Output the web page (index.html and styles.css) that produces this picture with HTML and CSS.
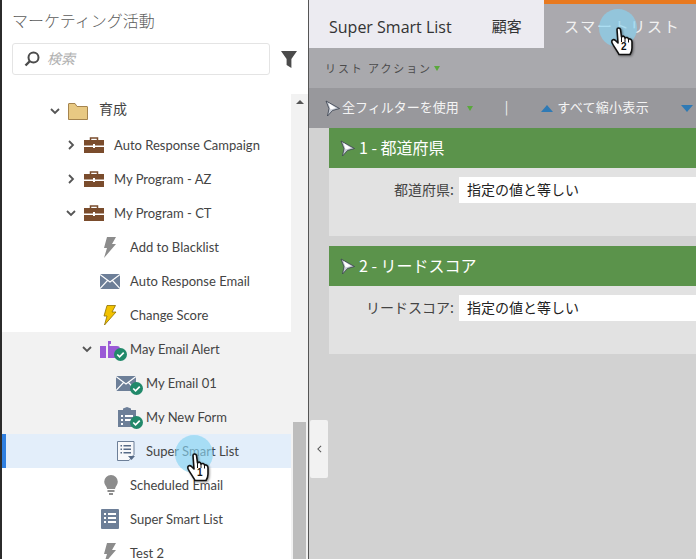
FILE: index.html
```html
<!DOCTYPE html>
<html lang="ja">
<head>
    <meta charset="UTF-8">
    <title>Super Smart List</title>
    <link rel="stylesheet" href="styles.css">
</head>
<body>
<div class="page">
    <aside class="sidebar">
        <h2 class="side-title">マーケティング活動</h2>
        <div class="search-row">
            <div class="search">
                <svg class="search-icon" viewBox="0 0 16 16"><circle cx="9.500" cy="6.500" r="5" fill="none" stroke="#4b4b4b" stroke-width="2"/><path d="M6 10l-4.500 4.500" stroke="#4b4b4b" stroke-width="2.400"/></svg>
                <span class="search-text">検索</span>
            </div>
            <svg class="filter-icon" viewBox="0 0 16 17"><path d="M0 0h16l-5.600 8v9l-4.800-3V8z" fill="#4b4b4b"/></svg>
        </div>
        <div class="tree-wrap">
            <div class="tree">
                <div class="row ind-1">
                    <svg class="chev" viewBox="0 0 10 10"><path d="M1 3l4 4 4-4" fill="none" stroke="#555" stroke-width="1.800"/></svg>
                    <svg class="icon folder" viewBox="0 0 20 17"><path d="M.5 16.500V1q0-.5.5-.5h6l2 3h10q.5 0 .5.5v12.500z" fill="#e8c983" stroke="#a5844e"/></svg>
                    <span class="cjk-label">育成</span>
                </div>
                <div class="row ind-2">
                    <svg class="chev" viewBox="0 0 10 10"><path d="M3 1l4 4-4 4" fill="none" stroke="#555" stroke-width="1.800"/></svg>
                    <svg class="icon case" viewBox="0 0 20 16"><path d="M6.500 3V1h7v2" fill="none" stroke="#7a4c2c" stroke-width="1.500"/><path d="M0 3h20v5.500H11V7H9v1.500H0zM0 10h9v1h2v-1h9v6H0z" fill="#7a4c2c"/></svg>
                    <span>Auto Response Campaign</span>
                </div>
                <div class="row ind-2">
                    <svg class="chev" viewBox="0 0 10 10"><path d="M3 1l4 4-4 4" fill="none" stroke="#555" stroke-width="1.800"/></svg>
                    <svg class="icon case" viewBox="0 0 20 16"><path d="M6.500 3V1h7v2" fill="none" stroke="#7a4c2c" stroke-width="1.500"/><path d="M0 3h20v5.500H11V7H9v1.500H0zM0 10h9v1h2v-1h9v6H0z" fill="#7a4c2c"/></svg>
                    <span>My Program - AZ</span>
                </div>
                <div class="row ind-2">
                    <svg class="chev" viewBox="0 0 10 10"><path d="M1 3l4 4 4-4" fill="none" stroke="#555" stroke-width="1.800"/></svg>
                    <svg class="icon case" viewBox="0 0 20 16"><path d="M6.500 3V1h7v2" fill="none" stroke="#7a4c2c" stroke-width="1.500"/><path d="M0 3h20v5.500H11V7H9v1.500H0zM0 10h9v1h2v-1h9v6H0z" fill="#7a4c2c"/></svg>
                    <span>My Program - CT</span>
                </div>
                <div class="row ind-3">
                    <svg class="icon bolt" viewBox="0 0 14 21"><path d="M4 0h9L9 7h4L1 21l3-10H1z" fill="#8c8c8c"/></svg>
                    <span>Add to Blacklist</span>
                </div>
                <div class="row ind-3">
                    <svg class="icon mail" viewBox="0 0 20 15"><rect width="20" height="15" fill="#6d7f98"/><path d="M0 .5l10 7.500 10-7.500M0 14.500l7.500-8M20 14.500l-7.500-8" fill="none" stroke="#fff" stroke-width="1.100"/></svg>
                    <span>Auto Response Email</span>
                </div>
                <div class="row ind-3">
                    <svg class="icon bolt" viewBox="0 0 14 21"><path d="M4 .5h8.500L9 7h4L1.500 20l2.500-9H1z" fill="#f2c200" stroke="#8d7000" stroke-width=".8"/></svg>
                    <span>Change Score</span>
                </div>
                <div class="row ind-4 shaded">
                    <svg class="chev" viewBox="0 0 10 10"><path d="M1 3l4 4 4-4" fill="none" stroke="#555" stroke-width="1.800"/></svg>
                    <span class="icon-wrap">
                        <svg class="icon prog" viewBox="0 0 20 17"><path d="M0 5h6v12H0zM8 0h3v3H9.500v2H17q3 0 3 3v9H8z" fill="#9a59d6"/></svg>
                        <svg class="check check-prog" viewBox="0 0 14 14"><circle cx="7" cy="7" r="7" fill="#21896a"/><path d="M3.500 7l2.500 2.500 4.500-4.500" fill="none" stroke="#fff" stroke-width="1.800"/></svg>
                    </span>
                    <span>May Email Alert</span>
                </div>
                <div class="row ind-5 shaded">
                    <span class="icon-wrap">
                        <svg class="icon mail" viewBox="0 0 20 15"><rect width="20" height="15" fill="#6d7f98"/><path d="M0 .5l10 7.500 10-7.500M0 14.500l7.500-8M20 14.500l-7.500-8" fill="none" stroke="#fff" stroke-width="1.100"/></svg>
                        <svg class="check check-mail" viewBox="0 0 14 14"><circle cx="7" cy="7" r="7" fill="#21896a"/><path d="M3.500 7l2.500 2.500 4.500-4.500" fill="none" stroke="#fff" stroke-width="1.800"/></svg>
                    </span>
                    <span>My Email 01</span>
                </div>
                <div class="row ind-5 shaded">
                    <span class="icon-wrap">
                        <svg class="icon form" viewBox="0 0 18 20"><path d="M0 3h5V1.500L9 0l4 1.500V3h5v17H0z" fill="#6d7f98"/><path d="M3 8h2v2H3zM7 8h8v2H7zM3 12h2v2H3zM7 12h8v2H7zM3 16h2v2H3z" fill="#fff"/></svg>
                        <svg class="check check-form" viewBox="0 0 14 14"><circle cx="7" cy="7" r="7" fill="#21896a"/><path d="M3.500 7l2.500 2.500 4.500-4.500" fill="none" stroke="#fff" stroke-width="1.800"/></svg>
                    </span>
                    <span>My New Form</span>
                </div>
                <div class="row ind-5 selected">
                    <svg class="icon smart" viewBox="0 0 18 20"><path d="M.5.500h16.500v13l-5 6H.5z" fill="#f7f8fa" stroke="#6d7f98"/><path d="M3.500 4h1.500v1.500H3.500zM6.500 4h7.500v1.500H6.500zM3.500 7.500h1.500V9H3.500zM6.500 7.500h7.500V9H6.500zM3.500 11h1.500v1.500H3.500zM6.500 11h7.500v1.500H6.500z" fill="#566a86"/><path d="M11 15h7l-3.500 4z" fill="#566a86"/></svg>
                    <span>Super Smart List</span>
                </div>
                <div class="row ind-3">
                    <svg class="icon bulb" viewBox="0 0 14 20"><path d="M7 0a6.800 6.800 0 0 1 6.800 6.800c0 3-2.300 4.500-2.800 7.200H3.200C2.700 11.300.2 9.800.2 6.800A6.800 6.800 0 0 1 7 0z" fill="#8c8c8c"/><path d="M3.500 15h7v2h-7zM5 18h4v2H5z" fill="#8c8c8c"/></svg>
                    <span>Scheduled Email</span>
                </div>
                <div class="row ind-3">
                    <svg class="icon list" viewBox="0 0 18 20"><rect width="18" height="20" rx="1" fill="#6d7f98"/><path d="M3 4h2v2H3zM7 4h8v2H7zM3 8h2v2H3zM7 8h8v2H7zM3 12h2v2H3zM7 12h8v2H7z" fill="#fff"/></svg>
                    <span>Super Smart List</span>
                </div>
                <div class="row ind-3">
                    <svg class="icon bolt" viewBox="0 0 14 21"><path d="M4 0h9L9 7h4L1 21l3-10H1z" fill="#8c8c8c"/></svg>
                    <span>Test 2</span>
                </div>
            </div>
            <div class="scrollbar">
                <span class="scroll-up"></span>
                <span class="scroll-thumb"></span>
            </div>
        </div>
    </aside>

    <main class="main">
        <div class="tabs">
            <div class="tab-group">
                <span class="tab-title">Super Smart List</span>
                <span class="tab-plain">顧客</span>
            </div>
            <div class="tab-active">スマートリスト</div>
        </div>
        <div class="bar-list">リスト アクション<span class="mini-tri"></span></div>
        <div class="bar-tools">
            <svg class="funnel" viewBox="0 0 17 17"><path d="M2 1l13.500 7.500L8.500 10.500 3.500 16 5 8.500z" fill="#c4c9d2" stroke="#39404e" stroke-width=".8" stroke-linejoin="round"/><path d="M4.500 3l7.500 5-5.500 1.500z" fill="#fff"/></svg>
            <span class="tool-text">全フィルターを使用</span>
            <span class="mini-tri tool-tri"></span>
            <span class="tool-sep">|</span>
            <span class="tri-up"></span>
            <span class="tool-text tool-wide">すべて縮小表示</span>
            <span class="tri-down"></span>
        </div>
        <div class="content">
            <section class="card">
                <div class="card-head">
                    <svg class="funnel" viewBox="0 0 17 17"><path d="M2 1l13.500 7.500L8.500 10.500 3.500 16 5 8.500z" fill="#c4c9d2" stroke="#39404e" stroke-width=".8" stroke-linejoin="round"/><path d="M4.500 3l7.500 5-5.500 1.500z" fill="#fff"/></svg>
                    <span>1 - 都道府県</span>
                </div>
                <div class="card-body">
                    <span class="field-label">都道府県:</span>
                    <span class="field-value">指定の値と等しい</span>
                </div>
            </section>
            <section class="card">
                <div class="card-head">
                    <svg class="funnel" viewBox="0 0 17 17"><path d="M2 1l13.500 7.500L8.500 10.500 3.500 16 5 8.500z" fill="#c4c9d2" stroke="#39404e" stroke-width=".8" stroke-linejoin="round"/><path d="M4.500 3l7.500 5-5.500 1.500z" fill="#fff"/></svg>
                    <span>2 - リードスコア</span>
                </div>
                <div class="card-body">
                    <span class="field-label">リードスコア:</span>
                    <span class="field-value">指定の値と等しい</span>
                </div>
            </section>
        </div>
    </main>

    <!-- overlays -->
    <div class="collapse">
        <svg viewBox="0 0 6 10"><path d="M5 1L1 5l4 4" fill="none" stroke="#555" stroke-width="1.300"/></svg>
    </div>
    <div class="pointer pointer-1">
        <span class="halo"></span>
        <svg class="hand" viewBox="0 0 22 28"><path d="M6 2.500C6 .5 9 .5 9.500 2.500l1 7.500c1.500-1.500 3-1 3.500 1 1.500-1 3-.5 3.500 1 1.500-.5 3.500.5 3.500 3v6c0 3-1 5-2 6.500H8C7 25 1 17 .8 15c-.3-2.500 2.200-3 3.700-1.500L7 16z" fill="#fff" stroke="#111" stroke-width="1.600" stroke-linejoin="round"/><path d="M10.500 10v5M14 11v4M17.500 12v3.500" stroke="#111" fill="none"/></svg>
        <span class="hand-num">1</span>
    </div>
    <div class="pointer pointer-2">
        <span class="halo"></span>
        <svg class="hand" viewBox="0 0 22 28"><path d="M6 2.500C6 .5 9 .5 9.500 2.500l1 7.500c1.500-1.500 3-1 3.500 1 1.500-1 3-.5 3.500 1 1.500-.5 3.500.5 3.500 3v6c0 3-1 5-2 6.500H8C7 25 1 17 .8 15c-.3-2.500 2.200-3 3.700-1.500L7 16z" fill="#fff" stroke="#111" stroke-width="1.600" stroke-linejoin="round"/><path d="M10.500 10v5M14 11v4M17.500 12v3.500" stroke="#111" fill="none"/></svg>
        <span class="hand-num">2</span>
    </div>
</div>
</body>
</html>
```

FILE: styles.css
```css
* {
    box-sizing: border-box;
}

html,
body {
    margin: 0;
    padding: 0;
    height: 100%;
    overflow: hidden;
}

body {
    font-family: "Lato", "Noto Sans CJK JP", sans-serif;
    color: #4b4b4b;
    background-color: #fff;
}

.page {
    position: relative;
    display: flex;
    width: 696px;
    height: 559px;
    overflow: hidden;
    border-left: 2px solid #2b2b2b;
}

/* left panel */
.sidebar {
    width: 307px;
    height: 559px;
    flex-shrink: 0;
    background-color: #fff;
    border-right: 1px solid #555;
    display: flex;
    flex-direction: column;
}

.side-title {
    margin: 0;
    padding: 11px 0 0 10px;
    height: 43px;
    font-size: 16px;
    font-weight: 300;
    line-height: 19px;
    color: #5c5c5c;
    font-family: "Noto Sans CJK JP", sans-serif;
}

.search-row {
    display: flex;
    align-items: center;
    height: 32px;
    padding-left: 10px;
}

.search {
    width: 258px;
    height: 32px;
    border: 1px solid #e4e4e4;
    border-radius: 3px;
    display: flex;
    align-items: center;
    padding-left: 11px;
}

.search-icon {
    width: 16px;
    height: 16px;
    margin-right: 7px;
}

.search-text {
    font-size: 14px;
    font-style: italic;
    color: #b0b0b0;
    margin-bottom: 2px;
    font-family: "Noto Sans CJK JP", sans-serif;
}

.filter-icon {
    width: 16px;
    height: 17px;
    margin-left: 11px;
}

.tree-wrap {
    display: flex;
    margin-top: 19px;
    flex: 1;
    min-height: 0;
}

.tree {
    width: 289px;
    flex-shrink: 0;
}

.row {
    display: flex;
    align-items: center;
    height: 34px;
    font-size: 13px;
    white-space: nowrap;
    color: #444;
}

.ind-1 { padding-left: 48px; }
.ind-2 { padding-left: 64px; }
.ind-3 { padding-left: 98px; }
.ind-4 { padding-left: 80px; }
.ind-5 { padding-left: 114px; }

.shaded {
    background-color: #f2f2f2;
}

.selected {
    background-color: #e3eefa;
    border-left: 4px solid #2f7fe0;
    padding-left: 111px;
}

.chev {
    width: 10px;
    height: 10px;
    margin-right: 8px;
}

.icon {
    flex-shrink: 0;
}

.folder { width: 20px; height: 17px; margin-right: 11px; }
.case { width: 20px; height: 16px; margin-right: 10px; }
.bolt { width: 14px; height: 21px; margin: 0 13px 0 3px; }
.mail { width: 20px; height: 15px; margin-right: 10px; display: block; }
.bulb { width: 14px; height: 20px; margin: 0 12px 0 4px; }
.list { width: 18px; height: 20px; margin: 0 11px 0 1px; }
.prog { width: 20px; height: 17px; display: block; }
.form { width: 18px; height: 20px; display: block; margin-left: 2px; }
.smart { width: 18px; height: 20px; margin: 0 11px 0 0; }

.cjk-label {
    font-family: "Noto Sans CJK JP", sans-serif;
    font-size: 14px;
    margin-bottom: 6px;
}

.icon-wrap {
    position: relative;
    display: block;
    width: 26px;
    margin-right: 4px;
    flex-shrink: 0;
}

.check {
    position: absolute;
    right: -1px;
    width: 13px;
    height: 13px;
}

.check-prog { bottom: -3px; }
.check-mail { bottom: -4px; }
.check-form { bottom: -2px; }

.scrollbar {
    width: 17px;
    background-color: #f2f2f2;
    position: relative;
    flex-shrink: 0;
}

.scroll-up {
    position: absolute;
    left: 5px;
    top: 6px;
    border-left: 4px solid transparent;
    border-right: 4px solid transparent;
    border-bottom: 4px solid #555;
}

.scroll-thumb {
    position: absolute;
    left: 2px;
    top: 328px;
    bottom: 0;
    width: 13px;
    background-color: #bdbdbd;
}

/* right panel */
.main {
    flex: 1;
    min-width: 0;
    height: 559px;
    display: flex;
    flex-direction: column;
    background-color: #d2d2d2;
}

.tabs {
    display: flex;
    height: 48px;
    flex-shrink: 0;
    background-color: #aaa9ae;
}

.tab-group {
    width: 235px;
    background-color: #ecebf1;
    display: flex;
    align-items: center;
    padding: 6px 0 0 20px;
    font-size: 16px;
    color: #333;
    font-family: "Open Sans", "Noto Sans CJK JP", sans-serif;
}

.tab-plain {
    margin-left: 40px;
    padding-bottom: 4px;
    font-family: "Noto Sans CJK JP", sans-serif;
    font-size: 15px;
}

.tab-active {
    flex: 1;
    border-top: 4px solid #e8791f;
    color: #f1f1f1;
    font-size: 15px;
    font-family: "Noto Sans CJK JP", sans-serif;
    letter-spacing: 1.700px;
    padding: 11px 0 0 20px;
    white-space: nowrap;
}

.bar-list {
    height: 40px;
    flex-shrink: 0;
    display: flex;
    align-items: center;
    padding: 0 0 0 16px;
    background-color: #a9a9ad;
    font-size: 11px;
    color: #4b4b4b;
    letter-spacing: 1.900px;
    font-family: "Noto Sans CJK JP", sans-serif;
}

.mini-tri {
    display: inline-block;
    margin-left: 2px;
    border-left: 3.500px solid transparent;
    border-right: 3.500px solid transparent;
    border-top: 5px solid #5aa83c;
}

.bar-tools {
    height: 40px;
    flex-shrink: 0;
    display: flex;
    align-items: center;
    padding: 0 0 4px 15px;
    background-color: #98989c;
    white-space: nowrap;
    overflow: hidden;
    font-family: "Noto Sans CJK JP", sans-serif;
    font-size: 13px;
    color: #f4f4f4;
}

.funnel {
    width: 17px;
    height: 17px;
    flex-shrink: 0;
}

.bar-tools .funnel {
    margin: 4px 1px 0 0;
}

.tool-tri {
    margin: 4px 0 0 8px;
}

.tool-sep {
    margin: 0 33px 0 32px;
}

.tool-wide {
    letter-spacing: 0.300px;
}

.tri-up {
    margin: 4px 4px 0 0;
    border-left: 6px solid transparent;
    border-right: 6px solid transparent;
    border-bottom: 7px solid #2f7ab5;
}

.tri-down {
    margin: 4px 0 0 32px;
    border-left: 6px solid transparent;
    border-right: 6px solid transparent;
    border-top: 7px solid #2f7ab5;
}

.content {
    padding-left: 20px;
    display: flex;
    flex-direction: column;
    gap: 10px;
}

.card-head {
    height: 40px;
    background-color: #5b934b;
    color: #fff;
    font-size: 16px;
    display: flex;
    align-items: center;
    gap: 3px;
    padding-left: 10px;
    font-family: "Noto Sans CJK JP", sans-serif;
}

.card-head span {
    margin-bottom: 2px;
}

.card-body {
    height: 68px;
    background-color: #e2e2e2;
    display: flex;
    align-items: flex-start;
    padding-top: 9px;
    font-family: "Noto Sans CJK JP", sans-serif;
    font-size: 14px;
}

.field-label {
    width: 130px;
    text-align: right;
    padding-right: 5px;
    line-height: 25px;
    color: #444;
    flex-shrink: 0;
}

.field-value {
    flex: 1;
    height: 26px;
    line-height: 24px;
    background-color: #fff;
    color: #222;
    padding-left: 8px;
}

/* overlays */
.collapse {
    position: absolute;
    left: 308px;
    top: 420px;
    width: 18px;
    height: 58px;
    background-color: #f2f2f2;
    border-radius: 2px;
    display: flex;
    align-items: center;
    justify-content: center;
}

.collapse svg {
    width: 5px;
    height: 8px;
}

.pointer {
    position: absolute;
    width: 38px;
    height: 38px;
}

.pointer-1 {
    left: 173px;
    top: 435px;
}

.pointer-2 {
    left: 597px;
    top: 9px;
}

.halo {
    position: absolute;
    inset: 0;
    border-radius: 50%;
    background-color: rgba(135, 212, 243, 0.65);
}

.hand {
    position: absolute;
    left: 12px;
    top: 18px;
    width: 22px;
    height: 28px;
    overflow: visible;
    filter: drop-shadow(1px 1px 1px rgba(0, 0, 0, 0.4));
}

.hand-num {
    position: absolute;
    left: 22px;
    top: 32px;
    font-size: 10px;
    line-height: 12px;
    font-weight: 700;
    color: #111;
    font-family: "Liberation Sans", sans-serif;
}
```
